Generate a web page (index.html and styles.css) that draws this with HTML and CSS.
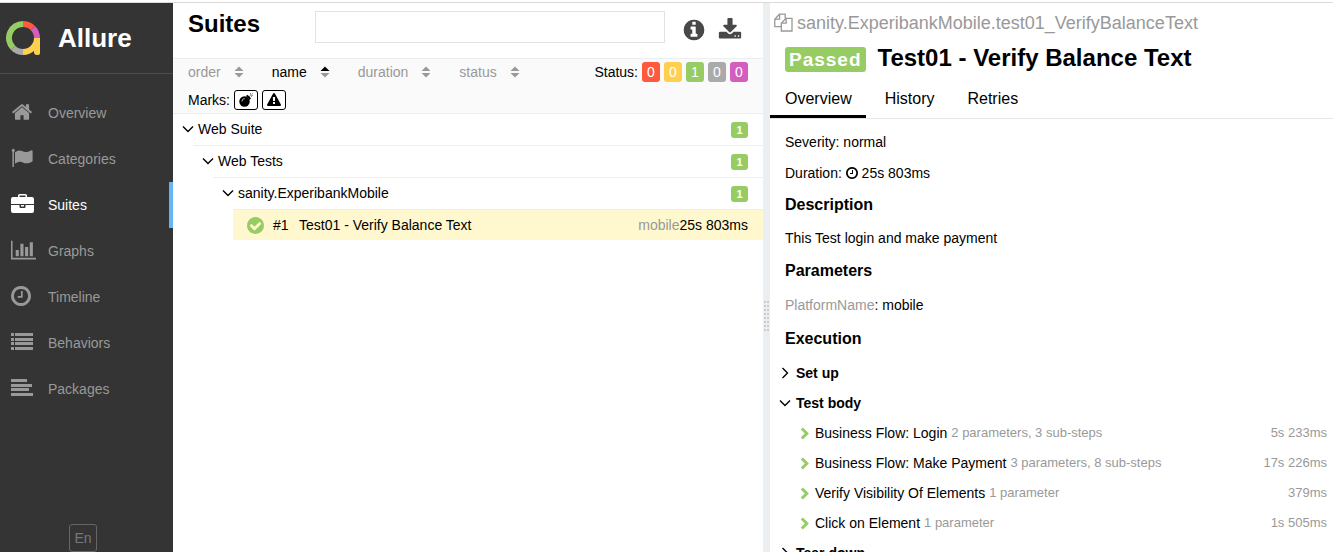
FILE: index.html
```html
<!DOCTYPE html>
<html lang="en">
<head>
<meta charset="utf-8">
<title>Allure Report</title>
<link rel="stylesheet" href="styles.css">
</head>
<body>
<svg class="defs" aria-hidden="true">
  <symbol id="i-clock" viewBox="128 128 1536 1536"><path d="M1024 544v448q0 14-9 23t-23 9h-320q-14 0-23-9t-9-23v-64q0-14 9-23t23-9h224v-352q0-14 9-23t23-9h64q14 0 23 9t9 23zm416 352q0-148-73-273t-198-198-273-73-273 73-198 198-73 273 73 273 198 198 273 73 273-73 198-198 73-273zm224 0q0 209-103 385.500t-279.500 279.500-385.500 103-385.500-103-279.500-279.500-103-385.500 103-385.500 279.500-279.500 385.500-103 385.500 103 279.500 279.500 103 385.500z"/></symbol>
  <symbol id="i-sort" viewBox="0 0 10 12"><path class="up" d="M5 0.500L9.500 5H.5z"/><path class="down" d="M5 11.500L.5 7h9z"/></symbol>
  <symbol id="i-down" viewBox="0 0 12 8"><path d="M1 1.500l5 5 5-5" fill="none" stroke="currentColor" stroke-width="1.400"/></symbol>
  <symbol id="i-right" viewBox="0 0 8 12"><path d="M1.500 1l5 5-5 5" fill="none" stroke="currentColor" stroke-width="1.400"/></symbol>
  <symbol id="i-chev" viewBox="0 0 10 13"><path d="M1.800 1.500l5 5-5 5" fill="none" stroke="currentColor" stroke-width="3"/></symbol>
</svg>
<div class="app">
  <aside class="side">
    <a class="brand" href="#">
      <svg class="logo line-art" viewBox="0 0 34 34" stroke-width="6">
        <path d="M17 3A14 14 0 0 1 26.900 7.100" stroke="#fd5a3e"/>
        <path d="M26.900 7.100A14 14 0 0 1 31 17" stroke="#d35ebe"/>
        <path d="M7.100 26.900A14 14 0 0 0 17 31" stroke="#aaa"/>
        <path d="M17 3A14 14 0 0 0 7.100 26.900" stroke="#97cc64"/>
        <path d="M31 17A14 14 0 0 1 17 31" stroke="#ffd050"/>
        <path d="M34 17v15q0 2-2 2h-1q-3 0-3-3v-5l2-9z" fill="#ffd050" stroke="none"/>
      </svg>
      <span>Allure</span>
    </a>
    <nav class="nav">
      <a class="item" href="#"><svg viewBox="0 0 1792 1792"><path d="M1472 992v480q0 26-19 45t-45 19h-384v-384h-256v384h-384q-26 0-45-19t-19-45v-480q0-1 .5-3t.5-3l575-474 575 474q1 2 1 6zm223-69l-62 74q-8 9-21 11h-3q-13 0-21-7l-692-577-692 577q-12 8-24 7-13-2-21-11l-62-74q-8-10-7-23.500t11-21.500l719-599q32-26 76-26t76 26l244 204v-195q0-14 9-23t23-9h192q14 0 23 9t9 23v408l219 182q10 8 11 21.500t-7 23.500z"/></svg><span>Overview</span></a>
      <a class="item" href="#"><svg viewBox="0 0 22 22"><path d="M.6 3.500a1.600 1.600 0 1 1 2.300 1.400V20H1.400V4.900z"/><path d="M4 5.200C6.500 3.500 9 3 11 4c3 1.400 5 1.300 9-.6q1.600-.6 1.600.6v10.300c-3.600 2.300-6.800 2.600-9.800 1.100-2.200-1-4.600-.6-7.800 1.400z"/></svg><span>Categories</span></a>
      <a class="item active" href="#"><svg viewBox="0 0 23 22"><path fill-rule="evenodd" d="M7 4V2.500Q7 1 8.500 1h6q1.500 0 1.500 1.500V4h5q2 0 2 2v5H0V6q0-2 2-2zM8.500 4h6V2.500h-6z"/><path fill-rule="evenodd" d="M0 12h8.500v2q0 1 1 1h4q1 0 1-1v-2H23v6q0 2-2 2H2q-2 0-2-2zM10 12h3v1.500h-3z"/></svg><span>Suites</span></a>
      <a class="item" href="#"><svg class="graph" viewBox="0 0 2048 1792"><path d="M640 896v512h-256v-512h256zm384-512v1024h-256v-1024h256zm1024 1152v128h-2048v-1536h128v1408h1920zm-640-896v768h-256v-768h256zm384-384v1152h-256v-1152h256z"/></svg><span>Graphs</span></a>
      <a class="item" href="#"><svg class="watch"><use href="#i-clock"/></svg><span>Timeline</span></a>
      <a class="item" href="#"><svg viewBox="0 0 22 22"><path d="M0 2h3v3H0zM4 2h18v3H4zM0 7h3v3H0zM4 7h18v3H4zM0 11h3v3H0zM4 11h18v3H4zM0 16h3v3H0zM4 16h18v3H4z"/></svg><span>Behaviors</span></a>
      <a class="item" href="#"><svg viewBox="0 0 22 22"><path d="M0 2h16v3H0zM0 7h21v3H0zM0 11h18v3H0zM0 16h22v3H0z"/></svg><span>Packages</span></a>
    </nav>
    <div class="lang-row"><button class="lang">En</button></div>
  </aside>

  <main class="suites">
    <header class="head">
      <h1>Suites</h1>
      <input class="search" type="text" aria-label="Search">
      <button class="tool" aria-label="Info"><svg viewBox="0 0 1792 1792"><path d="M1152 1376v-160q0-14-9-23t-23-9h-96v-512q0-14-9-23t-23-9h-320q-14 0-23 9t-9 23v160q0 14 9 23t23 9h96v320h-96q-14 0-23 9t-9 23v160q0 14 9 23t23 9h448q14 0 23-9t9-23zm-128-896v-160q0-14-9-23t-23-9h-192q-14 0-23 9t-9 23v160q0 14 9 23t23 9h192q14 0 23-9t9-23zm640 416q0 209-103 385.500t-279.500 279.500-385.500 103-385.500-103-279.500-279.500-103-385.500 103-385.500 279.500-279.500 385.500-103 385.500 103 279.500 279.500 103 385.500z"/></svg></button>
      <button class="tool" aria-label="Download"><svg viewBox="0 0 1792 1792"><path d="M1344 1344q0-26-19-45t-45-19-45 19-19 45 19 45 45 19 45-19 19-45zm256 0q0-26-19-45t-45-19-45 19-19 45 19 45 45 19 45-19 19-45zm128-224v320q0 40-28 68t-68 28h-1472q-40 0-68-28t-28-68v-320q0-40 28-68t68-28h465l135 136q58 56 136 56t136-56l136-136h464q40 0 68 28t28 68zm-325-569q17 41-14 70l-448 448q-18 19-45 19t-45-19l-448-448q-31-29-14-70 17-39 59-39h256v-448q0-26 19-45t45-19h256q26 0 45 19t19 45v448h256q42 0 59 39z"/></svg></button>
    </header>
    <div class="controls">
      <div class="line">
        <div class="sorts">
          <button class="sort">order<svg><use href="#i-sort"/></svg></button>
          <button class="sort on">name<svg><use href="#i-sort"/></svg></button>
          <button class="sort">duration<svg><use href="#i-sort"/></svg></button>
          <button class="sort">status<svg><use href="#i-sort"/></svg></button>
        </div>
        <div class="chips"><span>Status:</span>
          <button class="chip failed">0</button><button class="chip broken">0</button><button class="chip passed">1</button><button class="chip skipped">0</button><button class="chip unknown">0</button>
        </div>
      </div>
      <div class="line marks"><span>Marks:</span>
        <button class="mark" aria-label="Flaky"><svg viewBox="0 0 14 14"><circle cx="5.500" cy="8.500" r="5.200"/><path d="M7 3l1.500-1.300L12 5.200 10.500 7z"/><path d="M3 8.500A2.800 2.800 0 0 1 5.800 5.600" fill="none" stroke="#fff" stroke-width=".7"/><path d="M10 3.800l1.500-1.500M11.500.3v1.200M13.700 2.400h-1.200M13.500.5l-.8.800M13 4l-.6-.6" stroke="#000" stroke-width=".7"/></svg></button>
        <button class="mark" aria-label="New failed"><svg viewBox="0 0 1792 1792"><path d="M1024 1375v-190q0-14-9.500-23.500t-22.500-9.500h-192q-13 0-22.500 9.500t-9.500 23.500v190q0 14 9.500 23.500t22.500 9.500h192q13 0 22.500-9.500t9.500-23.500zm-2-374l18-459q0-12-10-19-13-11-24-11h-220q-11 0-24 11-10 7-10 21l17 457q0 10 10 16.500t24 6.500h185q14 0 23.500-6.500t10.500-16.500zm-14-934l768 1408q35 63-2 126-17 29-46.500 46t-63.500 17h-1536q-34 0-63.500-17t-46.500-46q-37-63-2-126l768-1408q17-31 47-49t65-18 65 18 47 49z"/></svg></button>
      </div>
    </div>
    <div class="tree">
      <button class="node"><svg><use href="#i-down"/></svg><span>Web Suite</span><b class="count">1</b></button>
      <div class="kids">
        <button class="node"><svg><use href="#i-down"/></svg><span>Web Tests</span><b class="count">1</b></button>
        <div class="kids">
          <button class="node"><svg><use href="#i-down"/></svg><span>sanity.ExperibankMobile</span><b class="count">1</b></button>
          <div class="kids">
            <a class="leaf" href="#"><svg viewBox="128 128 1536 1536"><path d="M1412 734q0-28-18-46l-91-90q-19-19-45-19t-45 19l-408 407-226-226q-19-19-45-19t-45 19l-91 90q-18 18-18 46 0 27 18 45l362 362q19 19 45 19 27 0 46-19l543-543q18-18 18-45zm252 162q0 209-103 385.500t-279.500 279.500-385.500 103-385.500-103-279.500-279.500-103-385.500 103-385.500 279.500-279.500 385.500-103 385.500 103 279.500 279.500 103 385.500z"/></svg><span class="num">#1</span><span>Test01 - Verify Balance Text</span><span class="time"><i>mobile</i>25s 803ms</span></a>
          </div>
        </div>
      </div>
    </div>
  </main>

  <div class="gutter"><div class="grip"></div></div>

  <section class="detail">
    <div class="full"><svg class="line-art" viewBox="0 0 19 19" stroke="currentColor" stroke-width="1.300"><path d="M7.300 13.700H.8V6.200L5.400 1.200h5.800v4.200M5.600 1.200v5H.8M7.300 18V10.200L12 5.400h6V18zM12.200 5.400v4.800H7.300"/></svg><span>sanity.ExperibankMobile.test01_VerifyBalanceText</span></div>
    <div class="title"><span class="badge">Passed</span><h2>Test01 - Verify Balance Text</h2></div>
    <nav class="tabs"><a class="tab on" href="#">Overview</a><a class="tab" href="#">History</a><a class="tab" href="#">Retries</a></nav>
    <div class="body">
      <div class="row">Severity: normal</div>
      <div class="row">Duration: <svg class="clock"><use href="#i-clock"/></svg> 25s 803ms</div>
      <h3>Description</h3>
      <p class="text">This Test login and make payment</p>
      <h3>Parameters</h3>
      <p class="text param"><span>PlatformName</span>: mobile</p>
      <h3>Execution</h3>
      <div class="exec">
        <button class="stage"><svg><use href="#i-right"/></svg>Set up</button>
        <button class="stage"><svg><use href="#i-down"/></svg>Test body</button>
        <button class="step"><svg><use href="#i-chev"/></svg><span>Business Flow: Login</span><small>2 parameters, 3 sub-steps</small><small class="dur">5s 233ms</small></button>
        <button class="step"><svg><use href="#i-chev"/></svg><span>Business Flow: Make Payment</span><small>3 parameters, 8 sub-steps</small><small class="dur">17s 226ms</small></button>
        <button class="step"><svg><use href="#i-chev"/></svg><span>Verify Visibility Of Elements</span><small>1 parameter</small><small class="dur">379ms</small></button>
        <button class="step"><svg><use href="#i-chev"/></svg><span>Click on Element</span><small>1 parameter</small><small class="dur">1s 505ms</small></button>
        <button class="stage"><svg><use href="#i-right"/></svg>Tear down</button>
      </div>
    </div>
  </section>
</div>
</body>
</html>
```

FILE: styles.css
```css
* { box-sizing: border-box; }
body {
  margin: 0;
  background: #fff;
  color: #000;
  font: 14px/20px "Liberation Sans", Arial, sans-serif;
}
a { color: inherit; text-decoration: none; }
button { margin: 0; padding: 0; border: 0; background: none; color: inherit; font: inherit; text-align: left; cursor: pointer; }
h1, h2, h3, p { margin: 0; }
svg { flex: none; fill: currentColor; }
.line-art { fill: none; }
.defs { display: none; }

.app {
  display: grid;
  grid-template-columns: 173px minmax(0, 590fr) 7px minmax(0, 563fr);
  height: 100vh;
  padding-top: 3px;
  overflow: hidden;
  background: linear-gradient(#fff 2px, #dadada 2px, #dadada 3px, #fff 3px);
}

/* sidebar */
.side { display: flex; flex-direction: column; background: #343434; color: #999; }
.brand {
  display: flex;
  align-items: center;
  gap: 18px;
  height: 71px;
  padding-left: 6px;
  border-bottom: 1px solid #4d4d4d;
  color: #fff;
  font-size: 26px;
  font-weight: bold;
}
.logo { width: 34px; height: 34px; }
.nav { flex: 1; padding-top: 16px; }
.item { display: flex; align-items: center; height: 46px; padding-left: 11px; border-right: 4px solid transparent; }
.item svg { width: 22px; height: 22px; margin: 0 15px 3px 0; }
.item .graph { width: 25px; margin-right: 12px; }
.item .watch { width: 20px; height: 20px; margin-right: 17px; }
.item.active { border-color: #64b5f6; color: #fff; }
.item.active svg { width: 23px; margin-right: 14px; }
.lang-row { display: flex; justify-content: center; }
.lang { width: 28px; height: 28px; margin-right: 7px; border: 1px solid #666; border-radius: 3px; color: #777; text-align: center; }

/* suites */
.head { display: flex; align-items: center; height: 55px; padding: 0 21px 2px 15px; color: #484848; }
.head h1 { width: 127px; height: 44px; padding-bottom: 12px; color: #000; font-size: 24px; line-height: 32px; }
.search { flex: 1; min-width: 0; height: 32px; margin: 0 17px 6px 0; border: 1px solid #e3e3e3; font: inherit; }
.tool { display: flex; }
.tool + .tool { margin-left: 12px; }
.tool svg { width: 24px; height: 24px; }
.controls { border: solid #eceff1; border-width: 1px 0; background: #fafafa; }
.line { display: flex; align-items: center; justify-content: space-between; height: 26px; padding: 0 15px; }
.line.marks { justify-content: flex-start; gap: 4px; height: 28px; padding-top: 2px; }
.sorts { display: flex; gap: 28px; }
.sort { display: flex; align-items: center; gap: 13px; color: #999; }
.sort svg { width: 10px; height: 12px; color: #999; }
.sort.on { color: #000; }
.sort.on svg { --up: #000; }
.up { fill: var(--up, #999); }
.chips { display: flex; align-items: center; gap: 4px; }
.chip { width: 18px; height: 20px; border-radius: 3px; color: #fff; text-align: center; }
.failed { background: #fd5a3e; }
.broken { background: #ffd050; }
.passed { background: #97cc64; }
.skipped { background: #aaa; }
.unknown { background: #d35ebe; }
.mark { display: flex; align-items: center; justify-content: center; width: 24px; height: 20px; border: 1px solid #000; border-radius: 3px; background: #fff; }
.mark svg { width: 14px; height: 14px; }

.node { display: flex; align-items: center; width: 100%; height: 31px; padding: 0 15px 0 9px; }
.node svg { width: 12px; height: 8px; margin: 0 4px 2px 0; }
.node span { padding-bottom: 2px; }
.count { width: 17px; height: 16px; margin-left: auto; border-radius: 3px; background: #97cc64; color: #fff; font-size: 11px; line-height: 16px; text-align: center; }
.kids { margin-left: 20px; border-top: 1px solid #eceff1; }
.leaf { display: flex; align-items: center; height: 30px; padding: 0 15px 0 14px; background: #fff8ce; }
.leaf svg { width: 17px; height: 17px; margin-right: 9px; color: #97cc64; }
.num { width: 26px; }
.time { margin-left: auto; }
.time i { color: #999; font-style: normal; }

/* resize gutter */
.gutter { display: flex; align-items: center; justify-content: center; background: #eceff1; }
.grip { width: 5px; height: 30px; margin-top: 77px; background: conic-gradient(from 270deg at 2px 2px, #ccc 90deg, transparent 0) 0 0 / 3px 4px; }

/* test details */
.detail { min-height: 0; overflow: hidden; }
.full { display: flex; align-items: center; gap: 4px; height: 39px; padding-left: 4px; color: #999; font-size: 18px; }
.full svg { width: 19px; height: 19px; }
.title { display: flex; align-items: center; gap: 12px; height: 34px; padding-left: 15px; }
.title h2 { padding-bottom: 2px; font-size: 24px; line-height: 30px; }
.badge { height: 25px; padding: 0 4px; border-radius: 3px; background: #97cc64; color: #fff; font-size: 19px; font-weight: bold; line-height: 25px; letter-spacing: 1px; }
.tabs { display: flex; gap: 4px; height: 43px; border-bottom: 1px solid #e5e5e5; font-size: 16px; }
.tab { height: 42px; padding: 0 14px 0 15px; line-height: 45px; }
.tab.on { border-bottom: 3px solid #000; }
.body { padding-top: 8px; }
.row { height: 31px; padding-left: 15px; line-height: 31px; }
.clock { width: 12px; height: 12px; vertical-align: -1px; }
.body h3 { padding-left: 15px; font-size: 16px; line-height: 32px; }
.text { padding-left: 15px; line-height: 34px; }
.param { line-height: 36px; }
.param span { color: #999; }
.exec { padding-top: 3px; }
.stage { display: flex; align-items: center; width: 100%; height: 30px; padding-left: 9px; font-weight: bold; }
.stage svg { width: 12px; height: 12px; margin-right: 5px; }
.step { display: flex; align-items: center; gap: 4px; width: 100%; height: 30px; padding: 0 6px 0 30px; }
.step svg { width: 10px; height: 13px; margin-right: 1px; color: #97cc64; }
.step small { color: #999; font-size: 13px; }
.step .dur { margin-left: auto; }
```
